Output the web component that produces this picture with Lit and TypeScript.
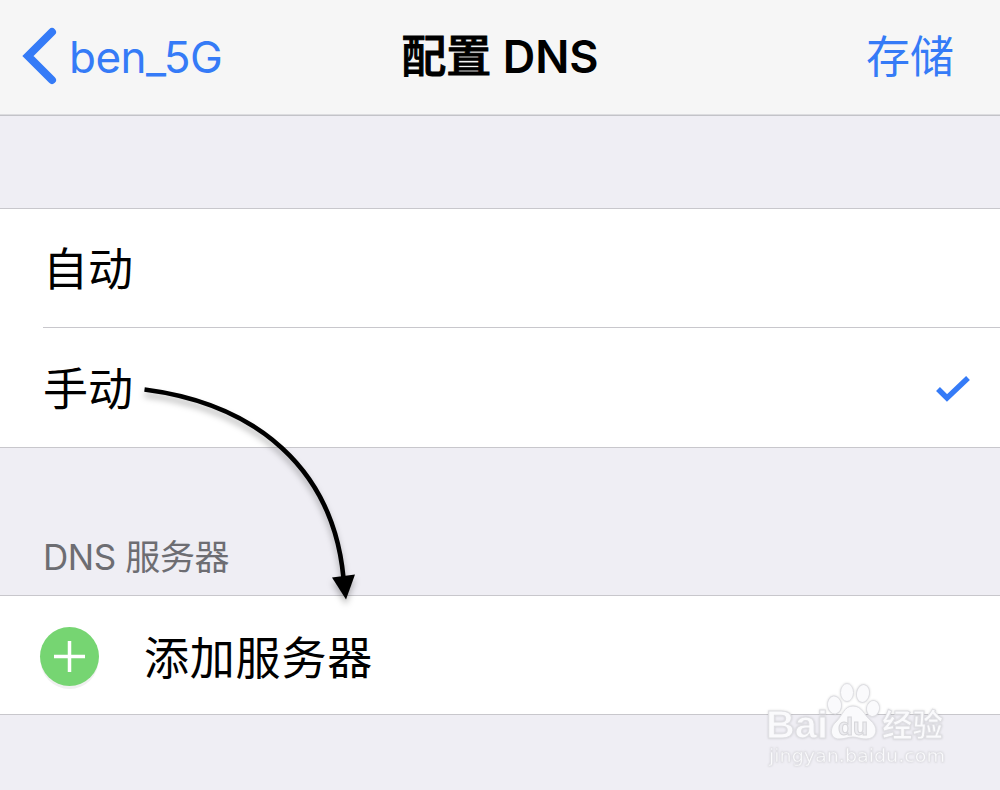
import { LitElement, html, css } from 'lit';
import { customElement, state } from 'lit/decorators.js';

@customElement('nav-bar')
class NavBar extends LitElement {
  static styles = css`
    :host {
      display: block;
    }

    .bar {
      box-sizing: border-box;
      height: 116px;
      display: grid;
      grid-template-columns: 1fr auto 1fr;
      align-items: center;
      padding: 0 46px 2px 22px;
      border-bottom: 1px solid #c3c3c8;
      box-shadow: inset 0 -1px 0 #dcdcdf;
      background-color: #f6f6f6;
      font-size: 44px;
      line-height: 60px;
      white-space: nowrap;
    }

    .back {
      display: flex;
      align-items: center;
      gap: 11px;
      color: #357bf7;
      letter-spacing: -0.5px;
    }

    .back svg {
      display: block;
      margin-bottom: 2px;
    }

    .title {
      padding-left: 24px;
      font-size: 45px;
      font-weight: 600;
    }

    .title .cjk {
      font-weight: 500;
      -webkit-text-stroke: 1px #000;
    }

    .save {
      text-align: right;
      color: #357bf7;
    }
  `;

  render() {
    return html`
      <div class="bar">
        <div class="back">
          <svg width="36" height="58" viewBox="0 0 36 58">
            <path d="M30 5 L6 29 L30 53" fill="none" stroke="#357bf7" stroke-width="8" stroke-linecap="round" />
          </svg>
          <span class="label">ben_5G</span>
        </div>
        <div class="title"><span class="cjk">配置</span> DNS</div>
        <div class="save">存储</div>
      </div>
    `;
  }
}

@customElement('curved-arrow')
class CurvedArrow extends LitElement {
  static styles = css`
    :host {
      position: absolute;
      left: 130px;
      top: 370px;
      pointer-events: none;
    }

    svg {
      display: block;
      overflow: visible;
      filter: drop-shadow(0 5px 3px rgba(0, 0, 0, 0.28));
    }
  `;

  render() {
    return html`
      <svg width="240" height="240" viewBox="0 0 240 240">
        <path d="M14.5 19.5 C126 34 203 98 213.5 208" fill="none" stroke="#000" stroke-width="4.6" />
        <path d="M202 207.5 L225 204.5 L216 229.5 Z" fill="#000" />
      </svg>
    `;
  }
}

@customElement('site-mark')
class SiteMark extends LitElement {
  static styles = css`
    :host {
      position: absolute;
      left: 760px;
      top: 676px;
      pointer-events: none;
    }

    svg {
      display: block;
      filter: drop-shadow(0 0 1px rgba(0, 0, 0, 0.14));
    }

    .mark {
      fill: #fafafc;
      stroke: #dedee2;
      stroke-width: 1;
    }

    .name {
      font: 700 38px 'Liberation Sans', sans-serif;
    }

    .du {
      fill: #ececf0;
      stroke: #d6d6da;
      font: 700 24px 'Liberation Sans', sans-serif;
    }

    .cjk {
      font: 700 31px 'Noto Sans CJK SC', sans-serif;
    }

    .url {
      font: 400 18.5px 'DejaVu Sans', sans-serif;
      stroke-width: 0.4;
    }
  `;

  render() {
    return html`
      <svg width="200" height="104" viewBox="0 0 200 104">
        <g class="mark">
          <ellipse cx="74.5" cy="29" rx="7" ry="9" transform="rotate(-8 74.5 29)" />
          <ellipse cx="87" cy="16.5" rx="6.5" ry="9" />
          <ellipse cx="103" cy="17.5" rx="6.5" ry="9" transform="rotate(10 103 17.5)" />
          <ellipse cx="113" cy="32.5" rx="6.5" ry="8" transform="rotate(10 113 32.5)" />
          <path d="M93 30 C102 30 104 39 111 45 C119 52 117 63 106 63 C100 63 97 61 93 61 C88 61 85 63 79 63 C70 63 69 52 76 46 C83 39 84 30 93 30 Z" />
          <text class="name" x="6" y="62" textLength="62" lengthAdjust="spacingAndGlyphs">Bai</text>
          <text class="du" x="78" y="59" textLength="30" lengthAdjust="spacingAndGlyphs">du</text>
          <text class="cjk" x="122" y="60" textLength="61" lengthAdjust="spacingAndGlyphs">经验</text>
          <text class="url" x="9" y="86" textLength="176" lengthAdjust="spacingAndGlyphs">jingyan.baidu.com</text>
        </g>
      </svg>
    `;
  }
}

@customElement('app-root')
class AppRoot extends LitElement {
  static styles = css`
    :host {
      display: block;
      position: relative;
      height: 790px;
      overflow: hidden;
      background-color: #efeef4;
      color: #000;
      font-family: Inter, 'Noto Sans CJK SC', sans-serif;
    }

    .list {
      border-top: 1px solid #c8c7cc;
      border-bottom: 1px solid #c8c7cc;
      background-color: #fff;
      font-size: 45px;
      line-height: 60px;
    }

    .modes {
      margin-top: 92px;
    }

    .row {
      box-sizing: border-box;
      height: 118px;
      display: flex;
      align-items: center;
      justify-content: space-between;
      margin-left: 43px;
      padding: 3px 29px 0 0;
      cursor: pointer;
    }

    .row .label {
      padding-top: 1px;
    }

    .row + .row {
      height: 120px;
      border-top: 1px solid #c8c7cc;
    }

    .heading {
      box-sizing: border-box;
      height: 147px;
      padding: 84px 0 0 43px;
      color: #6d6d72;
      font-size: 35px;
      line-height: 50px;
      letter-spacing: -0.4px;
    }

    .add {
      box-sizing: border-box;
      height: 118px;
      display: flex;
      align-items: center;
      gap: 45px;
      padding: 3px 0 0 40px;
    }

    .add svg {
      display: block;
      overflow: visible;
    }

    .add .label {
      padding-top: 5px;
      letter-spacing: 0.8px;
    }
  `;

  @state() mode = '手动';

  modes = ['自动', '手动'];

  render() {
    return html`
      <nav-bar></nav-bar>

      <div class="list modes">
        ${this.modes.map((mode) => html`
          <div class="row" @click=${() => { this.mode = mode; }}>
            <span class="label">${mode}</span>
            ${mode === this.mode ? html`
              <svg width="36" height="28" viewBox="0 0 36 28">
                <path d="M3 14 L12 23 L33 3" fill="none" stroke="#357bf7" stroke-width="5.5" />
              </svg>
            ` : ''}
          </div>
        `)}
      </div>

      <div class="heading">DNS 服务器</div>

      <div class="list">
        <div class="add">
          <svg width="59" height="59" viewBox="0 0 59 59">
            <circle cx="29.5" cy="33" r="29" fill="#f0f0f0" />
            <circle cx="29.5" cy="29.5" r="29.5" fill="#76d572" />
            <path d="M14 29.5 H45 M29.5 14 V45" stroke="#fff" stroke-width="3.5" />
          </svg>
          <span class="label">添加服务器</span>
        </div>
      </div>

      <curved-arrow></curved-arrow>
      <site-mark></site-mark>
    `;
  }
}
